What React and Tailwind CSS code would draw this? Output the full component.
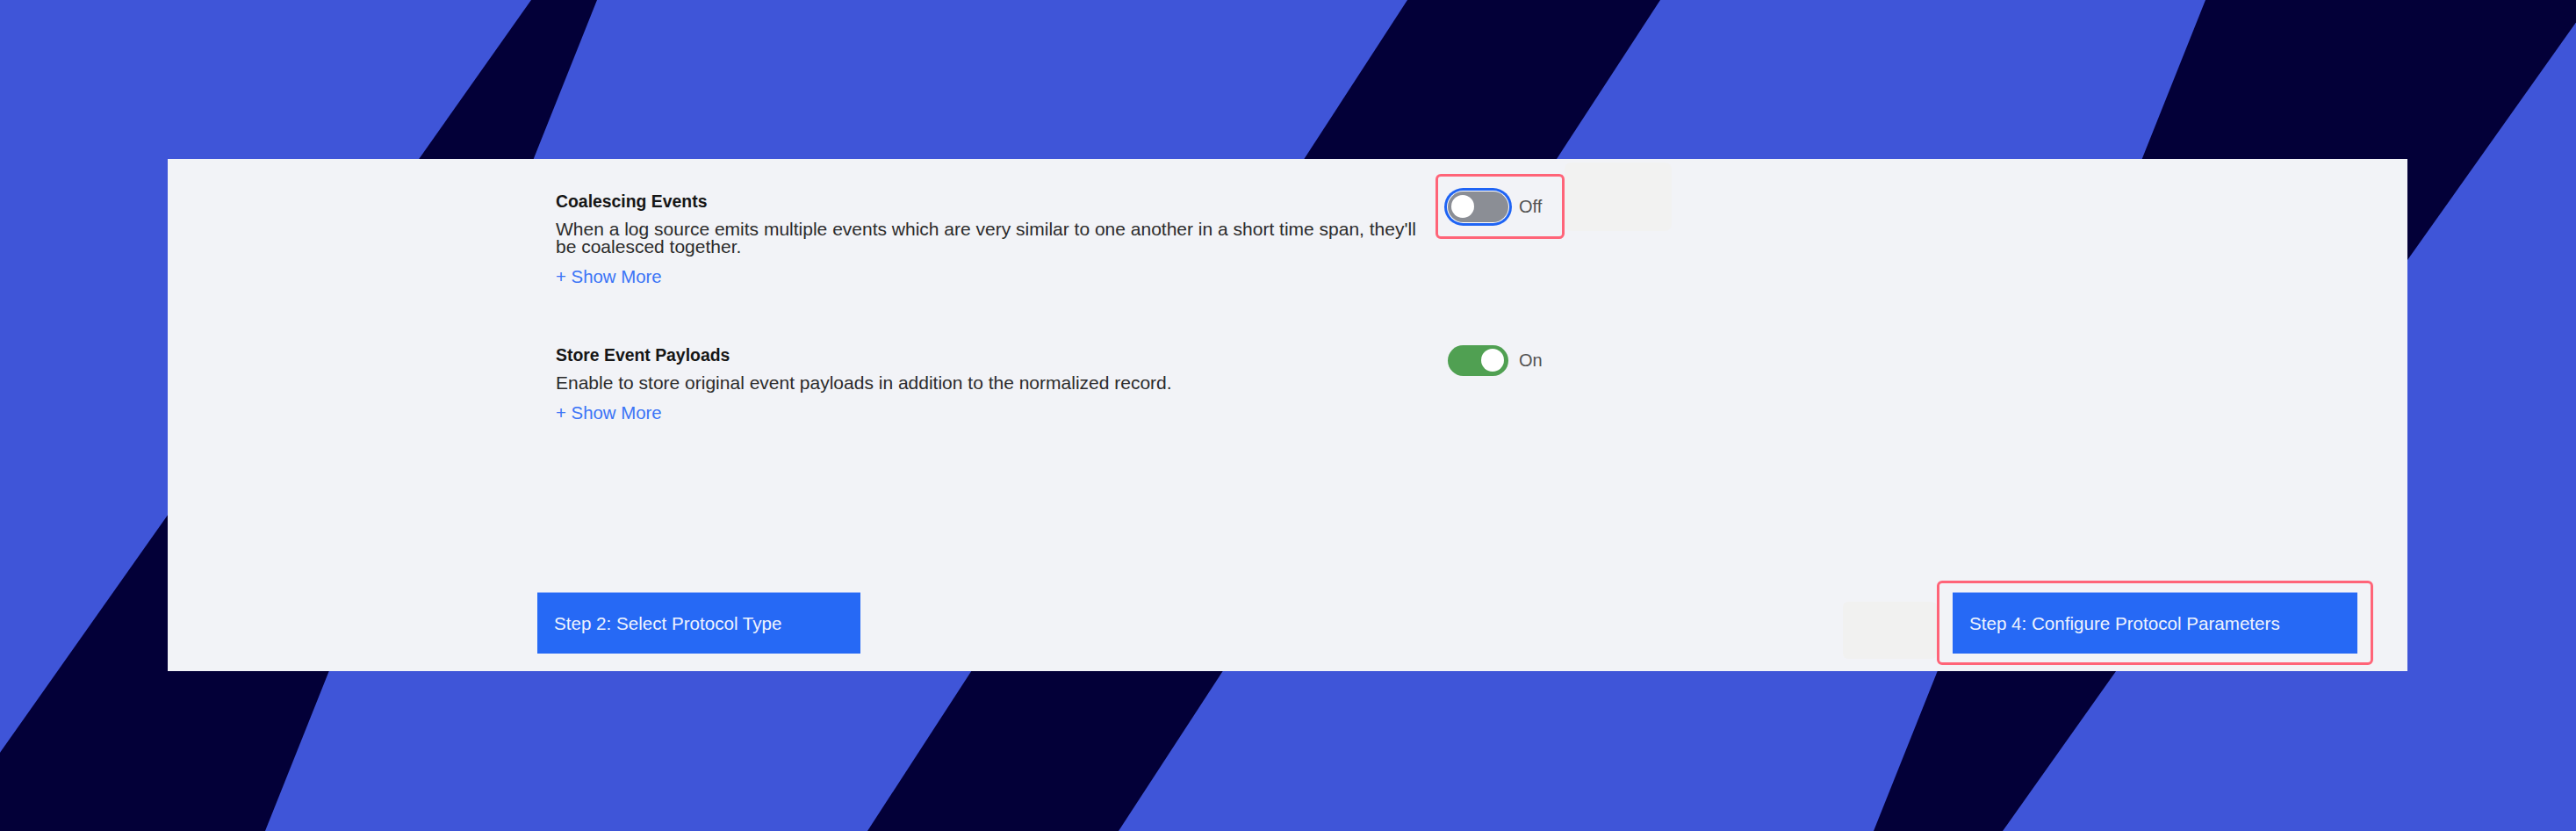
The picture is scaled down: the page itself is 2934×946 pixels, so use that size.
import React, { useState } from "react";

const font = "font-['Liberation_Sans',Arial,sans-serif]";

const Toggle = ({ on, focused }) => (
  <div
    className={`relative w-[69px] h-[35px] rounded-full shrink-0 ${
      on ? "bg-[#50a052]" : "bg-[#8b8e95]"
    } ${focused ? "shadow-[0_0_0_1px_#ffffff,0_0_0_4px_#1f64f4]" : ""}`}
  >
    <div
      className={`absolute top-[4.5px] w-[26px] h-[26px] rounded-full bg-white ${
        on ? "right-[5px]" : "left-[4px]"
      }`}
    />
  </div>
);

const SettingRow = ({ title, desc, on, highlighted, extra }) => (
  <div className="flex items-start pl-[442px]">
    <div className="w-[1002px] pt-[19px]">
      <h4 className="text-[19.4px] leading-[24px] font-bold text-[#161616]">{title}</h4>
      <p className="mt-[10px] max-w-[995px] text-[21px] leading-[20px] text-[#2b2b2b]">{desc}</p>
      <button className="mt-[12px] block text-[20.4px] leading-[24px] text-[#3b74f6]">+ Show More</button>
    </div>
    <div
      className={`flex items-center w-[147px] h-[74px] pl-[11px] rounded-[6px] border-[3px] ${
        highlighted ? "border-[#ff6478]" : "border-transparent"
      }`}
    >
      <Toggle on={on} focused={highlighted} />
      <span className="ml-[12px] text-[20px] text-[#525252]">{on ? "On" : "Off"}</span>
    </div>
    {extra && <div className="-mt-[13px] w-[122px] h-[78px] rounded-[8px] bg-[#f2f2f1]" />}
  </div>
);

const StepButton = ({ label, width }) => (
  <button
    className={`flex items-center h-[70px] ${width} pl-[19px] pt-[2px] bg-[#2669f5] border-t border-[#8eaff9] text-left text-[20.6px] text-[#eef3fe]`}
  >
    {label}
  </button>
);

export default function App() {
  const [coalesce] = useState(false);
  const [store] = useState(true);

  return (
    <div className={`relative w-[2934px] h-[946px] overflow-hidden bg-[#3f55d8] ${font}`}>
      {/* background stripes */}
      <svg className="absolute inset-0" width="2934" height="946" viewBox="0 0 2934 946">
        <polygon points="605,0 680,0 302,946 -63,946" fill="#030038" />
        <polygon points="1603,0 1891,0 1274,946 988,946" fill="#030038" />
        <polygon points="2512,0 2952,0 2281,946 2134,946" fill="#030038" />
      </svg>

      <div className="relative pt-[181px] pl-[191px]">
        <div className="flex flex-col w-[2551px] h-[583px] bg-[#f2f3f7] pt-[17px]">
          <SettingRow
            title="Coalescing Events"
            desc="When a log source emits multiple events which are very similar to one another in a short time span, they'll be coalesced together."
            on={coalesce}
            highlighted
            extra
          />
          <div className="mt-[46px]">
            <SettingRow
              title="Store Event Payloads"
              desc="Enable to store original event payloads in addition to the normalized record."
              on={store}
            />
          </div>

          <div className="mt-auto flex items-center justify-between h-[96px] mb-[7px] pl-[421px] pr-[39px]">
            <StepButton label="Step 2: Select Protocol Type" width="w-[368px]" />
            <div className="flex items-center">
              <div className="self-end mb-[7px] w-[107px] h-[65px] rounded-[6px] bg-[#f1f1f0]" />
              <div className="px-[15px] py-[10px] rounded-[6px] border-[3px] border-[#ff6478]">
                <StepButton label="Step 4: Configure Protocol Parameters" width="w-[461px]" />
              </div>
            </div>
          </div>
        </div>
      </div>
    </div>
  );
}
